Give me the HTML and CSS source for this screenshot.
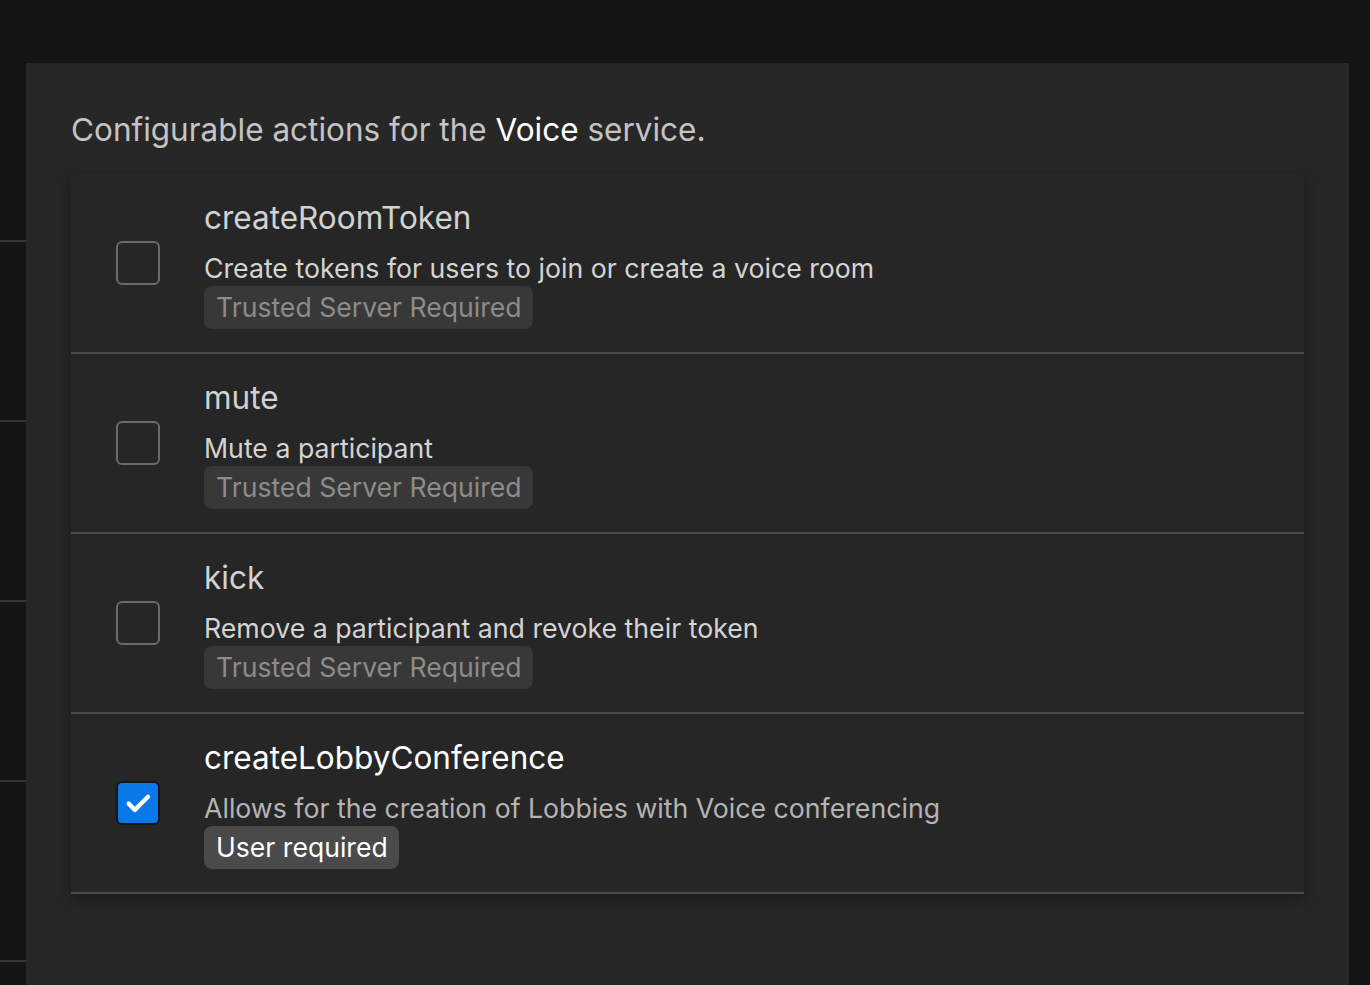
FILE: index.html
```html
<!DOCTYPE html>
<html lang="en">
<head>
<meta charset="utf-8">
<title>Voice service actions</title>
<link rel="stylesheet" href="styles.css">
</head>
<body>
<div class="sidebar">
  <div class="side-row"></div>
  <div class="side-row"></div>
  <div class="side-row"></div>
  <div class="side-row"></div>
  <div class="side-row"></div>
</div>
<main class="panel">
  <p class="intro">Configurable actions for the <span class="strong">Voice</span> service.</p>
  <div class="card">
    <div class="row">
      <span class="check"></span>
      <div class="info">
        <div class="title">createRoomToken</div>
        <div class="desc">Create tokens for users to join or create a voice room</div>
        <span class="badge">Trusted Server Required</span>
      </div>
    </div>
    <div class="row">
      <span class="check"></span>
      <div class="info">
        <div class="title">mute</div>
        <div class="desc">Mute a participant</div>
        <span class="badge">Trusted Server Required</span>
      </div>
    </div>
    <div class="row">
      <span class="check"></span>
      <div class="info">
        <div class="title">kick</div>
        <div class="desc">Remove a participant and revoke their token</div>
        <span class="badge">Trusted Server Required</span>
      </div>
    </div>
    <div class="row row-on">
      <span class="check check-on">
        <svg viewBox="0 0 24 24" width="30" height="30"><path d="M4.5 12.5l5 5L20 7" fill="none" stroke="#fff" stroke-width="3.4" stroke-linecap="round" stroke-linejoin="round"/></svg>
      </span>
      <div class="info">
        <div class="title">createLobbyConference</div>
        <div class="desc">Allows for the creation of Lobbies with Voice conferencing</div>
        <span class="badge badge-on">User required</span>
      </div>
    </div>
  </div>
</main>
</body>
</html>
```

FILE: styles.css
```css
html, body {
  margin: 0;
  height: 100%;
}
body {
  background: #141414;
  font-family: Inter, "Noto Sans", sans-serif;
  display: flex;
  align-items: flex-start;
  overflow: hidden;
}
.sidebar {
  width: 26px;
  flex: none;
  display: flex;
  flex-direction: column;
  padding-top: 62px;
}
.side-row {
  height: 178px;
  border-bottom: 2px solid #363636;
}
.panel {
  width: 1323px;
  flex: none;
  margin-top: 63px;
  min-height: 922px;
  background: #272727;
  box-sizing: border-box;
  padding: 0 45px;
}
.intro {
  margin: 0;
  padding: 48px 0 0 0;
  height: 63px;
  font-size: 31.5px;
  line-height: 38px;
  color: #c4c4c4;
}
.strong {
  color: #ffffff;
}
.card {
  background: #262626;
  box-shadow: 0 6px 18px rgba(0, 0, 0, 0.35);
}
.row {
  display: flex;
  align-items: center;
  height: 178px;
  border-bottom: 2px solid #4a4a4a;
}
.check {
  flex: none;
  width: 40px;
  height: 40px;
  margin: 0 44px 0 45px;
  border: 2px solid #6a6a6a;
  border-radius: 6px;
  display: flex;
  align-items: center;
  justify-content: center;
}
.check-on {
  background: #0a78e8;
  border-color: #161616;
}
.info {
  display: flex;
  flex-direction: column;
  align-items: flex-start;
  padding-top: 2px;
}
.title {
  font-size: 31.5px;
  line-height: 36px;
  color: #d2d2d2;
  margin-bottom: 14px;
}
.desc {
  font-size: 26.7px;
  line-height: 36px;
  color: #d4d4d4;
}
.badge {
  padding: 0 11px 0 12px;
  height: 43px;
  line-height: 43px;
  font-size: 26.6px;
  color: #8c8c8c;
  background: #383838;
  border-radius: 8px;
}
.row-on .title {
  color: #ffffff;
}
.row-on .desc {
  color: #b4b4b4;
}
.badge-on {
  background: #4a4a4a;
  color: #ffffff;
}
```
